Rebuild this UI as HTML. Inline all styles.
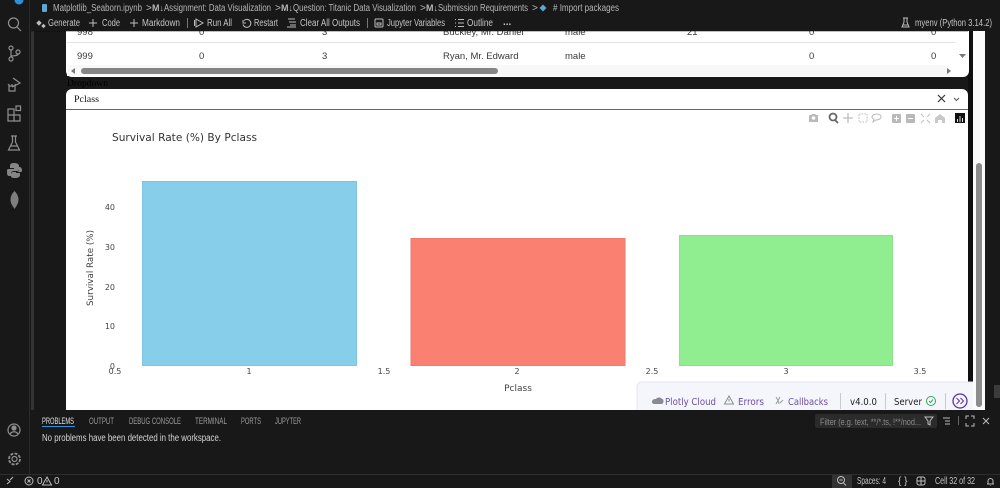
<!DOCTYPE html>
<html><head><meta charset="utf-8"><style>
html,body{margin:0;padding:0;background:#181818;width:1000px;height:488px;overflow:hidden}
svg{display:block}
.u{font-family:"Liberation Sans",sans-serif;font-size:10px;fill:#c4c4c4}
.p{font-family:"DejaVu Sans",sans-serif;font-size:8px;fill:#444}
.t{font-family:"Liberation Sans",sans-serif;font-size:9.5px;fill:#3a3a3a}
.d{font-family:"DejaVu Sans",sans-serif;font-size:10px;fill:#6b4fa0}
.ic{fill:none;stroke:#8f8f8f;stroke-width:1.2}
.tb{fill:none;stroke:#bcbcbc;stroke-width:1}
.tab{font-family:"Liberation Sans",sans-serif;font-size:9px;fill:#9c9c9c}
</style></head><body>
<svg width="1000" height="488" viewBox="0 0 1000 488" xmlns="http://www.w3.org/2000/svg">
<rect width="1000" height="488" fill="#181818"/>
<rect x="29" y="0" width="1" height="474" fill="#2b2b2b"/>
<rect x="31" y="31" width="3" height="379" fill="#333"/>

<!-- activity bar -->
<circle cx="19" cy="0" r="4.500" fill="#2f8fd8"/>
<g class="ic">
<circle cx="13.500" cy="23" r="5"/><path d="M17 27l4 4"/>
<circle cx="11" cy="48" r="2"/><circle cx="11" cy="59" r="2"/><circle cx="18" cy="52" r="2"/><path d="M11 50v7M11 56c5 0 7-1 7-2"/>
<path d="M13 78l7 5-8 4M9 86h6v5h-6zM12 84v2M8 84l2 2M16 84l-2 2"/>
<path d="M8 109h6v6h6v6H8zM8 115h12M14 115v6"/><rect x="16" y="106" width="4.500" height="4.500"/>
<path d="M11 136h6M12.500 136v6l-4 8h11l-4-8v-6M10.500 146h7"/>
<circle cx="14" cy="430" r="6"/><circle cx="14" cy="428" r="2" fill="#8f8f8f"/><path d="M10 434c2-3 6-3 8 0"/>
<circle cx="14.500" cy="459" r="2.500"/><circle cx="14.500" cy="459" r="5.500" stroke-dasharray="3 1.300" stroke-width="1.800"/>
</g>
<path d="M14 163c-3 0-4 1-4 3v2h4v1H8c-1 0-1 2-1 3s0 4 2 4h2v-2c0-2 1-3 3-3h3c1 0 2-1 2-2v-3c0-2-2-3-5-3z" fill="#858585"/>
<path d="M15 178c3 0 5-1 5-3v-2h-4v-1h5c1 0 1-1 1-2s-1-3-2-3h-1v2c0 2-1 3-3 3h-3c-1 0-2 1-2 2v2c0 2 2 2 4 2z" fill="#858585"/>
<path d="M14.500 191c3 3 4 6 4 9s-2 6-4 9c-2-3-4-6-4-9s1-6 4-9z" fill="#7e7e7e"/>

<!-- white right strip -->
<rect x="973" y="31" width="12" height="379" fill="#fbfbfb"/>
<rect x="968" y="31" width="5" height="351" fill="#0f0f0f"/>
<rect x="976" y="163" width="6" height="244" rx="3" fill="#8c8c8c"/>
<rect x="994" y="385" width="6" height="13" fill="#3c3c3c"/>

<!-- table card -->
<path d="M66 31H969V71a6 6 0 0 1-6 6H72a6 6 0 0 1-6-6z" fill="#fff"/>
<rect x="67" y="42" width="888" height="1" fill="#e3e3e3"/>
<rect x="67" y="65" width="880" height="11" fill="#f8f8f8"/>
<g class="t">
<text x="77" y="35">998</text><text x="199" y="35">0</text><text x="322" y="35">3</text><text x="443" y="35">Buckley, Mr. Daniel</text><text x="565" y="35">male</text><text x="687" y="35">21</text><text x="809" y="35">0</text><text x="931" y="35">0</text>
<text x="77" y="59">999</text><text x="199" y="59">0</text><text x="322" y="59">3</text><text x="443" y="59">Ryan, Mr. Edward</text><text x="565" y="59">male</text><text x="809" y="59">0</text><text x="931" y="59">0</text>
</g>
<rect x="81" y="68" width="417" height="6" rx="3" fill="#858585"/>
<path d="M75 68v6l-4-3z" fill="#777"/>
<path d="M947 68v6l4-3z" fill="#777"/>
<path d="M959 54h7l-3.500 4z" fill="#777"/>

<!-- Dropdown -->
<text x="67" y="86" font-family="Liberation Serif,serif" font-size="9.500" fill="#000" textLength="41" lengthAdjust="spacingAndGlyphs">Dropdown</text>
<path d="M66 95a6 6 0 0 1 6-6H962a6 6 0 0 1 6 6V109H66z" fill="#fff"/>
<rect x="66" y="109" width="902" height="1" fill="#666"/>
<text x="74" y="102" font-family="Liberation Serif,serif" font-size="9.500" fill="#111" textLength="25" lengthAdjust="spacingAndGlyphs">Pclass</text>
<path d="M938 95l7 7M945 95l-7 7" stroke="#333" stroke-width="1.200"/>
<path d="M954 98l2.500 2.500 2.500-2.500" fill="none" stroke="#555" stroke-width="1"/>

<!-- chart -->
<rect x="66" y="110" width="902" height="300" fill="#fff"/>
<rect x="142.500" y="181.500" width="214" height="184" fill="#87ceeb" stroke="#7fc4e0"/>
<rect x="411" y="238.500" width="214" height="127" fill="#fa8072" stroke="#f07a6c"/>
<rect x="679.500" y="235.500" width="213" height="130" fill="#90ee90" stroke="#8ae38a"/>
<text x="112" y="141" font-family="DejaVu Sans,sans-serif" font-size="11px" fill="#333" textLength="145" lengthAdjust="spacingAndGlyphs">Survival Rate (%) By Pclass</text>
<g class="p" text-anchor="end">
<text x="115" y="210">40</text><text x="115" y="250">30</text><text x="115" y="290">20</text><text x="115" y="329">10</text><text x="115" y="369">0</text>
</g>
<g class="p" text-anchor="middle">
<text x="115" y="374">0.5</text><text x="249" y="374">1</text><text x="384" y="374">1.5</text><text x="517" y="374">2</text><text x="652" y="374">2.5</text><text x="786" y="374">3</text><text x="920" y="374">3.5</text>
</g>
<text x="518" y="391" text-anchor="middle" font-family="DejaVu Sans,sans-serif" font-size="9px" fill="#444">Pclass</text>
<text transform="translate(93 268) rotate(-90)" text-anchor="middle" font-family="DejaVu Sans,sans-serif" font-size="9px" fill="#444" textLength="76" lengthAdjust="spacingAndGlyphs">Survival Rate (%)</text>

<!-- modebar -->
<g fill="#b9b9b9">
<path d="M809 115h2l1-1h3l1 1h2v7h-9z"/><circle cx="813.500" cy="118" r="1.800" fill="#fff"/>
<circle cx="833" cy="117" r="3.500" fill="none" stroke="#666" stroke-width="1.800"/><path d="M835 120l3 3" stroke="#666" stroke-width="1.800"/>
<path d="M848 113v10M843 118h10" stroke="#bbb" stroke-width="1.200"/>
<rect x="859" y="114" width="8" height="8" fill="none" stroke="#bbb" stroke-dasharray="1.500 1.200"/>
<path d="M872 117c0-2 3-3 5-3s4 1 4 3-3 3-5 3l-3 2 1-3c-1 0-2-1-2-2z" fill="none" stroke="#bbb"/>
<rect x="892" y="114" width="9" height="9" rx="1"/><path d="M896.500 116v5M894 118.500h5" stroke="#fff"/>
<rect x="906" y="114" width="9" height="9" rx="1"/><path d="M908 118.500h5" stroke="#fff"/>
<path d="M921 114l3 3M930 114l-3 3M921 123l3-3M930 123l-3-3" stroke="#c0c0c0"/>
<path d="M935 118l5-4 5 4v5h-3v-3h-4v3h-3z" fill="#c8c8c8"/>
</g>
<rect x="955" y="113" width="10" height="10" fill="#111"/>
<path d="M957.500 122v-3M960 122v-6M962.500 122v-4" stroke="#ddd" stroke-width="1"/>

<!-- debug bar -->
<path d="M637 410V387a5 5 0 0 1 5-5H973V410z" fill="#f5f6fb"/>
<path d="M637 410V387a5 5 0 0 1 5-5H973" fill="none" stroke="#e5e7ee"/>
<path d="M652 402c0-3 3-3 4-3 1-2 5-2 6 0 2 0 2 4 0 5h-8c-1 0-2-1-2-2z" fill="#8a8a95"/>
<text x="665" y="405" class="d" textLength="51" lengthAdjust="spacingAndGlyphs">Plotly Cloud</text>
<path d="M729 396l4.500 8h-9zM729 399v2.500" fill="none" stroke="#8a8a95"/>
<text x="738" y="405" class="d" textLength="26" lengthAdjust="spacingAndGlyphs">Errors</text>
<path d="M776 397c2 3 3 5 3 7M780 397l-4 7M783 400l-3 3" fill="none" stroke="#9a9a9a"/>
<text x="788" y="405" class="d" textLength="40" lengthAdjust="spacingAndGlyphs">Callbacks</text>
<rect x="840" y="393" width="1" height="16" fill="#c9c9d2"/>
<text x="850" y="405" font-family="DejaVu Sans,sans-serif" font-size="10px" fill="#222" textLength="27" lengthAdjust="spacingAndGlyphs">v4.0.0</text>
<rect x="885" y="393" width="1" height="16" fill="#c9c9d2"/>
<text x="894" y="405" font-family="DejaVu Sans,sans-serif" font-size="10px" fill="#222" textLength="28" lengthAdjust="spacingAndGlyphs">Server</text>
<circle cx="931" cy="401" r="4.500" fill="none" stroke="#3aa35c"/><path d="M929 401l1.500 1.500 2.500-3" fill="none" stroke="#3aa35c"/>
<rect x="945" y="393" width="1" height="16" fill="#c9c9d2"/>
<circle cx="960" cy="401" r="7" fill="none" stroke="#5b2fae" stroke-width="1.300"/>
<path d="M956.500 398l3 3-3 3M960.500 398l3 3-3 3" fill="none" stroke="#5b2fae"/>
<rect x="976" y="382" width="6" height="25" rx="3" fill="#8c8c8c"/>

<!-- top bars -->
<rect x="30" y="0" width="970" height="31" fill="#181818"/>
<rect x="30" y="31" width="938" height="1" fill="#000" opacity=".25"/>
<rect x="42" y="4" width="5" height="8" rx="1" fill="#5ba7d1"/>
<g class="u" style="fill:#b5b5b5">
<text x="53" y="11" textLength="89" lengthAdjust="spacingAndGlyphs">Matplotlib_Seaborn.ipynb</text><text x="146" y="11">&gt;</text>
<text x="152" y="11" style="font-size:9px" font-weight="bold">M↓</text><text x="164" y="11" textLength="107" lengthAdjust="spacingAndGlyphs">Assignment: Data Visualization</text><text x="275" y="11">&gt;</text>
<text x="281" y="11" style="font-size:9px" font-weight="bold">M↓</text><text x="293" y="11" textLength="123" lengthAdjust="spacingAndGlyphs">Question: Titanic Data Visualization</text><text x="420" y="11">&gt;</text>
<text x="426" y="11" style="font-size:9px" font-weight="bold">M↓</text><text x="438" y="11" textLength="90" lengthAdjust="spacingAndGlyphs">Submission Requirements</text><text x="532" y="11">&gt;</text>
<text x="553" y="11" textLength="66" lengthAdjust="spacingAndGlyphs"># Import packages</text>
</g>
<path d="M543 4.500l3.500 3.500-3.500 3.500-3.500-3.500z" fill="#5ba7d1"/>
<g class="u">
<text x="48" y="26" textLength="32" lengthAdjust="spacingAndGlyphs">Generate</text>
<text x="102" y="26" textLength="18" lengthAdjust="spacingAndGlyphs">Code</text>
<text x="142" y="26" textLength="38" lengthAdjust="spacingAndGlyphs">Markdown</text>
<text x="207" y="26" textLength="25" lengthAdjust="spacingAndGlyphs">Run All</text>
<text x="254" y="26" textLength="24" lengthAdjust="spacingAndGlyphs">Restart</text>
<text x="300" y="26" textLength="60" lengthAdjust="spacingAndGlyphs">Clear All Outputs</text>
<text x="387" y="26" textLength="58" lengthAdjust="spacingAndGlyphs">Jupyter Variables</text>
<text x="467" y="26" textLength="26" lengthAdjust="spacingAndGlyphs">Outline</text>
<text x="915" y="26" textLength="77" lengthAdjust="spacingAndGlyphs">myenv (Python 3.14.2)</text>
</g>
<g class="tb">
<path d="M37 23l2-2 2 2-2 2zM42 26l1.500-1.500 1.500 1.500-1.500 1.500z" fill="#bcbcbc"/>
<path d="M93 19v8M89 23h8M134 19v8M130 23h8"/>
<path d="M187.500 18v10M367.500 18v10" stroke="#777"/>
<path d="M196 19l7 4-7 4zM194.500 20v6"/>
<path d="M243 20v3h3M244 20.500a4 4 0 1 1-1 4"/>
<path d="M288 19h7M289 22h7M290 25h6M287 27h9"/>
<rect x="375" y="19" width="8" height="8" rx="1"/><path d="M377 23h4v2h-4z"/>
<path d="M455 19.500h1M458 19.500h6M455 23h1M458 23h6M455 26.500h1M458 26.500h6"/>
<path d="M903 18h5M904 18v4l-2 5h7l-2-5v-4M903 25h5"/>
</g>
<text x="503" y="25" class="u" font-weight="bold">...</text>

<!-- bottom panel -->
<rect x="30" y="410" width="970" height="64" fill="#181818"/>
<rect x="0" y="474" width="1000" height="14" fill="#181818"/>
<rect x="0" y="474" width="1000" height="1" fill="#2e2e2e"/>
<text x="42" y="424" class="tab" style="fill:#e0e0e0" textLength="32" lengthAdjust="spacingAndGlyphs">PROBLEMS</text>
<text x="89" y="424" class="tab" textLength="25" lengthAdjust="spacingAndGlyphs">OUTPUT</text>
<text x="129" y="424" class="tab" textLength="52" lengthAdjust="spacingAndGlyphs">DEBUG CONSOLE</text>
<text x="195" y="424" class="tab" textLength="32" lengthAdjust="spacingAndGlyphs">TERMINAL</text>
<text x="241" y="424" class="tab" textLength="20" lengthAdjust="spacingAndGlyphs">PORTS</text>
<text x="275" y="424" class="tab" textLength="26" lengthAdjust="spacingAndGlyphs">JUPYTER</text>
<rect x="42" y="426" width="33" height="1" fill="#2f8fd8"/>
<text x="42" y="441" class="u" style="fill:#d6d6d6" textLength="179" lengthAdjust="spacingAndGlyphs">No problems have been detected in the workspace.</text>
<rect x="815" y="414" width="122" height="14" rx="2" fill="#2b2b2b"/>
<text x="820" y="425" class="tab" style="fill:#8a8a8a" textLength="101" lengthAdjust="spacingAndGlyphs">Filter (e.g. text, **/*.ts, !**/nod...</text>
<g class="tb">
<path d="M925 417h8l-3 4v4l-2-1v-3z"/>
<path d="M943 418h7M945 421h5M945 424h5"/>
<path d="M958.500 416v9" stroke="#666"/>
<path d="M966 419v-3h3M971 416h3v3M974 423v3h-3M969 426h-3v-3"/>
<path d="M983 418l6 6M989 418l-6 6"/>
</g>
<!-- status bar -->
<rect x="832" y="475" width="20" height="13" fill="#333"/>
<g class="tb">
<path d="M7 479l3 2.500-3 2.500M13 477l-3 3"/>
<circle cx="29" cy="481" r="4"/><path d="M27.500 479.500l3 3M30.500 479.500l-3 3"/>
<path d="M47 477l4.500 8h-9zM47 480v2.500"/>
<circle cx="841" cy="480" r="3.500"/><path d="M843.500 483l2.500 2.500M839.500 480h3"/>
<rect x="917" y="477" width="8" height="8" rx="2"/><path d="M921 477v8M917 481h8"/>
<path d="M987 484h7M988 484v-3a2.500 2.500 0 0 1 5 0v3M990.500 485.500v.5"/>
</g>
<g class="u">
<text x="37" y="484">0</text><text x="54" y="484">0</text>
<text x="857" y="484" textLength="29" lengthAdjust="spacingAndGlyphs">Spaces: 4</text>
<text x="898" y="484">{ }</text>
<text x="935" y="484" textLength="40" lengthAdjust="spacingAndGlyphs">Cell 32 of 32</text>
</g>
</svg>
</body></html>
